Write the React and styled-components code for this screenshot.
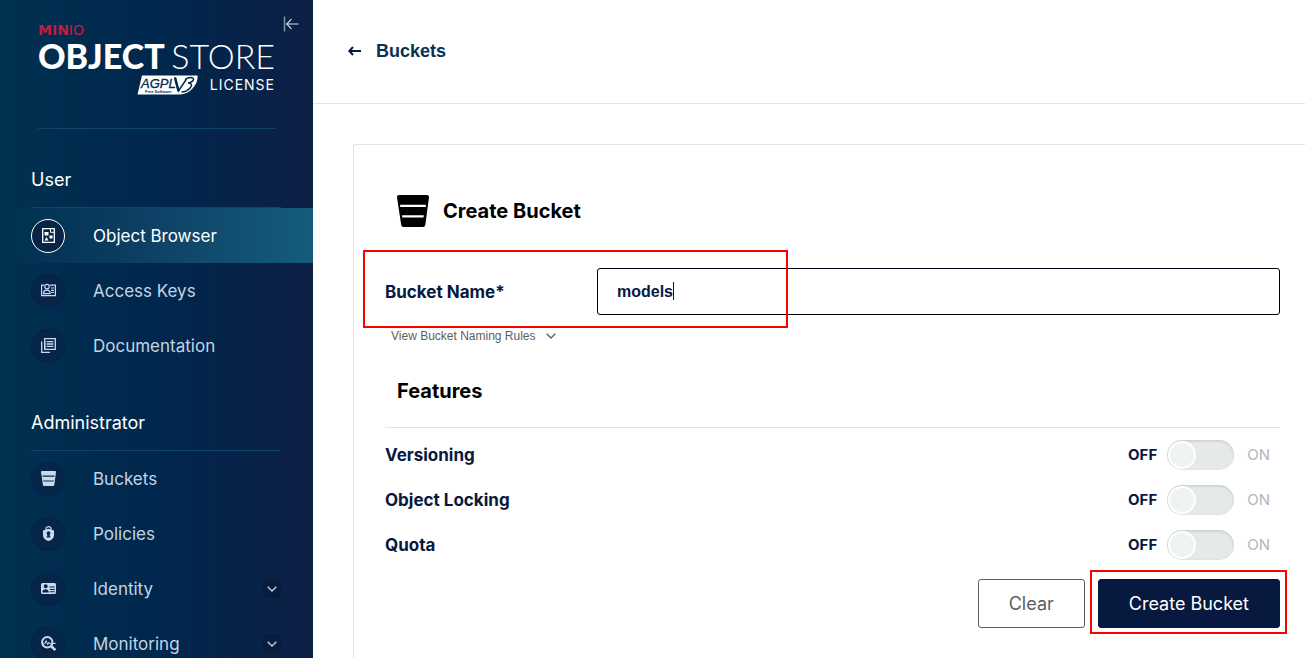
import React, { useState } from "react";
import styled, { createGlobalStyle, css } from "styled-components";

const GlobalStyle = createGlobalStyle`
  *, *::before, *::after { box-sizing: border-box; }
  body { margin: 0; background: #fff; font-family: Inter, "Liberation Sans", sans-serif; }
  button, input { font-family: inherit; }
`;

const Shell = styled.div`
  display: flex;
  height: 100vh;
  overflow: hidden;
`;

/* ---------- sidebar ---------- */

const Sidebar = styled.aside`
  flex: 0 0 313px;
  overflow: hidden;
  color: #fff;
  background: linear-gradient(90deg, #003150 0%, #00274d 50%, #0d1f45 100%);
`;

const Brand = styled.div`
  position: relative;
  margin: 0 38px;
  height: 129px;
  padding-top: 24px;
  border-bottom: 1px solid #0f446c;
`;

const CollapseButton = styled.button`
  position: absolute;
  top: 16px;
  right: -24px;
  padding: 0;
  border: 0;
  background: none;
  line-height: 0;
  cursor: pointer;
`;

const Company = styled.div`
  font: 700 14px/12px "DejaVu Sans", sans-serif;
  color: #c51b3f;
  span { font-weight: 400; }
`;

const Product = styled.div`
  display: flex;
  justify-content: space-between;
  margin-top: 2px;
  font: 900 34px/36px Lato, sans-serif;
  white-space: nowrap;
  span { font-weight: 300; }
`;

const License = styled.div`
  display: flex;
  justify-content: flex-end;
  align-items: center;
  gap: 12px;
  margin-top: 1px;
  font-size: 14px;
  line-height: 20px;
  span { letter-spacing: 1px; }
`;

const Section = styled.nav`
  & + & { margin-top: 22px; }
`;

const SectionTitle = styled.h2`
  margin: 0 32px 0 31px;
  height: ${(p) => (p.$first ? 79 : 56)}px;
  padding-bottom: 16px;
  display: flex;
  align-items: flex-end;
  border-bottom: 1px solid #0f446c;
  font-size: 18px;
  line-height: 22px;
  font-weight: 400;
`;

const NavLink = styled.a`
  display: flex;
  align-items: center;
  height: 55px;
  padding: 0 32px 0 31px;
  font-size: 17px;
  color: #c3d4e4;
  text-decoration: none;
  ${(p) => p.$active && css`
    color: #fff;
    background: linear-gradient(90deg, transparent 0%, #0e4266 50%, #155c7d 100%);
  `}
`;

const IconCircle = styled.span`
  display: grid;
  place-items: center;
  width: 34px;
  height: 34px;
  margin-right: 28px;
  border-radius: 50%;
  border: 1px solid ${(p) => (p.$active ? "#fff" : "#022248")};
  background: #072549;
  color: ${(p) => (p.$active ? "#fff" : "#c8dbee")};
`;

const Expander = styled.span`
  display: grid;
  place-items: center;
  width: 18px;
  height: 19px;
  margin-left: auto;
  border-radius: 2px;
  background: #081c3d;
`;

/* ---------- main ---------- */

const Main = styled.main`
  flex: 1;
  min-width: 0;
  display: flex;
  flex-direction: column;
`;

const TopBar = styled.header`
  display: flex;
  align-items: center;
  flex: 0 0 104px;
  padding: 0 35px 2px;
  border-bottom: 1px solid #e2e2e2;
`;

const BackLink = styled.a`
  display: flex;
  align-items: center;
  gap: 15px;
  font: 700 18px/20px "Liberation Sans", sans-serif;
  color: #073052;
  text-decoration: none;
`;

const Card = styled.form`
  flex: 1;
  margin: 40px 0 0 40px;
  padding: 48px 25px 0 31px;
  border: 1px solid #e2e2e2;
  border-width: 1px 0 0 1px;
  border-top-left-radius: 3px;
`;

const Title = styled.h1`
  display: flex;
  align-items: center;
  gap: 14px;
  height: 36px;
  margin: 0 0 39px;
  padding-left: 12px;
  font-size: 20px;
  font-weight: 700;
  color: #000;
`;

const NameRow = styled.div`
  position: relative;
  display: flex;
  align-items: center;
`;

const Label = styled.label`
  font-size: 17px;
  line-height: 22px;
  font-weight: 700;
  color: #07193e;
`;

const NameLabel = styled(Label)`
  flex: 0 0 212px;
`;

const InputWrap = styled.div`
  position: relative;
  flex: 1;
`;

const TextInput = styled.input`
  display: block;
  width: 100%;
  height: 47px;
  padding: 0 19px;
  border: 1px solid #000110;
  border-radius: 3px;
  outline: 0;
  background: #fff;
  font: 700 16px "Liberation Sans", sans-serif;
  color: #07193e;
`;

const Caret = styled.span`
  position: absolute;
  left: 76px;
  top: 14px;
  width: 1px;
  height: 18px;
  background: #07193e;
`;

const Highlight = styled.span`
  position: absolute;
  inset: ${(p) => p.$inset};
  border: 2px solid #f00;
  pointer-events: none;
  ${(p) => p.$width && css`width: ${p.$width}px;`}
`;

const RulesButton = styled.button`
  display: flex;
  align-items: center;
  gap: 10px;
  margin-top: 13px;
  padding: 0 6px;
  border: 0;
  background: none;
  font: 400 12px/16px "Liberation Sans", sans-serif;
  color: #5e5e5e;
`;

const SubTitle = styled.h2`
  margin: 34px 0 4px;
  padding: 0 12px 23px;
  border-bottom: 1px solid #e2e2e2;
  font-size: 20px;
  line-height: 26px;
  font-weight: 700;
  color: #000;
`;

const FeatureRow = styled.div`
  display: flex;
  align-items: center;
  justify-content: space-between;
  height: 45px;
`;

const SwitchGroup = styled.div`
  display: flex;
  align-items: center;
  padding-right: 10px;
`;

const SwitchText = styled.span`
  font-size: 15px;
  font-weight: ${(p) => (p.$on ? 700 : 400)};
  color: ${(p) => (p.$on ? "#07193e" : "#b3b6b9")};
`;

const Switch = styled.input`
  appearance: none;
  position: relative;
  width: 67px;
  height: 30px;
  margin: 0 13px 0 10px;
  border-radius: 15px;
  background: #e5e9ea;
  box-shadow: inset 0 1px 3px rgba(0, 0, 0, 0.15);
  cursor: pointer;
  &::before {
    content: "";
    position: absolute;
    top: 1px;
    left: ${(p) => (p.checked ? 38 : 1)}px;
    width: 28px;
    height: 28px;
    border: 2px solid #fff;
    border-radius: 50%;
    background: #f0f3f4;
  }
`;

const Actions = styled.div`
  display: flex;
  justify-content: flex-end;
  gap: 13px;
  margin-top: 12px;
`;

const Button = styled.button`
  position: relative;
  height: 49px;
  padding: 0 30px;
  border: 1px solid ${(p) => (p.$primary ? "#07193e" : "#5e5e5e")};
  border-radius: 3px;
  background: ${(p) => (p.$primary ? "#07193e" : "#fff")};
  color: ${(p) => (p.$primary ? "#fff" : "#5e5e5e")};
  font-size: 18px;
  cursor: pointer;
`;

/* ---------- icons ---------- */

const Icon = ({ size = 15, box = 15, children }) => (
  <svg width={size} height={size} viewBox={`0 0 ${box} ${box}`} fill="currentColor" aria-hidden="true">{children}</svg>
);

const ObjectBrowserIcon = () => (
  <Icon>
    <path d="M1.7.7h11.600v13.600H1.7z" fill="none" stroke="currentColor" strokeWidth="1.3" />
    <path d="M9.500 1v3.300h3.500" fill="none" stroke="currentColor" />
    <path d="M3.5 4h4v3.5h-4z M5.5 9l2 3.5h-4z" />
    <circle cx="10" cy="9" r="1.8" />
  </Icon>
);

const AccessKeysIcon = () => (
  <Icon>
    <g fill="none" stroke="currentColor" strokeWidth="1.2">
      <path d="M3 2.2H.6v10.500h13.8v-10.500H9" />
      <circle cx="6" cy="3.6" r="2.3" />
      <path d="M2.5 10.600c0-4.6 6.6-4.6 6.6 0z" />
      <path d="M10 5h3M10 7.3h3M10 9.5h3" />
    </g>
  </Icon>
);

const DocumentationIcon = () => (
  <Icon>
    <g fill="none" stroke="currentColor" strokeWidth="1.3">
      <path d="M3.7.7h10.6v10.6H3.7z" />
      <path d="M.7 3.5v10.8H9M3.7 11.3v-8" />
      <path d="M5.6 3.6h6.8M5.6 6h6.8M5.6 8.4h6.8" />
    </g>
  </Icon>
);

const BucketIcon = ({ size }) => (
  <Icon size={size} box={32}>
    <path
      fillRule="evenodd"
      d="M2 0h28q2.2 0 2 2.2L28.300 30q-.3 2-2.300 2H6.500q-2 0-2.300-2L0 2.200Q-.2 0 2 0zM3 9.800l.3 2.200h25.400l.3-2.200zM5 20.200l.3 2.200h21.200l.3-2.200z"
    />
  </Icon>
);

const PoliciesIcon = () => (
  <Icon>
    <path d="M5 4.500V2.600a2.500 2 0 0 1 5 0v1.900" fill="none" stroke="currentColor" strokeWidth="1.200" />
    <path
      fillRule="evenodd"
      d="M7.500 2.800 13 4.500v4.700c0 3-2.800 5-5.500 5.800C4.800 14.200 2 12.200 2 9.200V4.500zM7.500 5.200a2 2 0 0 0-1 3.700L5.400 11.500h4.200L8.500 8.900a2 2 0 0 0-1-3.700z"
    />
  </Icon>
);

const IdentityIcon = () => (
  <Icon>
    <path
      fillRule="evenodd"
      d="M1.500 2h12Q15 2 15 3.500v8Q15 13 13.500 13h-12Q0 13 0 11.500v-8Q0 2 1.500 2zM4.700 3.300a2 2 0 1 0 0 4 2 2 0 0 0 0-4zM1.300 11.500h6.500c0-4.200-6.500-4.200-6.500 0zM8.300 5.600v1h5.500v-1zM8.800 8v1h5V8zM8.800 10.300v1h5v-1z"
    />
  </Icon>
);

const MonitoringIcon = () => (
  <Icon>
    <g fill="none" stroke="currentColor">
      <circle cx="6.300" cy="6.300" r="5.200" strokeWidth="2" />
      <path d="M10 10l4.300 4" strokeWidth="2.600" />
      <path d="M2.500 7.200h1.700l1-2.600 1.500 4.200 1.200-2.600.7 1.200h6.200" strokeWidth="1" />
    </g>
  </Icon>
);

const Chevron = () => (
  <svg width="10" height="6" viewBox="0 0 10 6" fill="none" stroke="currentColor" strokeWidth="1.300" aria-hidden="true">
    <path d="M.7.7 5 5 9.300.7" />
  </svg>
);

const CollapseIcon = () => (
  <svg width="16" height="16" viewBox="0 0 16 16" fill="none" aria-hidden="true">
    <path d="M1.500.500v15" stroke="#7d93ab" strokeWidth="1.500" />
    <path d="M15.500 8H4M8.500 3.200 3.700 8l4.800 4.800" stroke="#d5dde6" strokeWidth="1.200" />
  </svg>
);

const BackIcon = () => (
  <svg width="13" height="10" viewBox="0 0 13 10" fill="none" stroke="#07193e" strokeWidth="2" aria-hidden="true">
    <path d="M13 5H1.500M5 1 1.300 5 5 9" />
  </svg>
);

/* AGPL v3 badge */
const AgplBadge = () => (
  <svg width="61" height="20" viewBox="0 0 61 20" role="img" aria-label="AGPL v3 Free Software">
    <path d="M5 .5h55.500c1 7-6 18.500-18 19H.5z" fill="#fff" />
    <path d="M38 2.500l3.500 13.500 8-12M48 4.500c4-3 9-2.500 8.500 0s-3 3-5.500 3.500c3.500 0 4.500 2 2.500 4.500s-5.500 4.500-9 4.500" fill="none" stroke="#02284e" strokeWidth="1.500" />
    <path d="M38 2.500l3.500 13.500" stroke="#02284e" strokeWidth="2.500" />
    <text x="4" y="13" fontFamily="Liberation Sans, sans-serif" fontStyle="italic" fontSize="13" fill="#02284e" stroke="#02284e" strokeWidth=".3">AGPL</text>
    <text x="8" y="18" fontFamily="Liberation Sans, sans-serif" fontWeight="700" fontSize="4" fill="#02284e">Free Software</text>
  </svg>
);

const userItems = [
  { label: "Object Browser", icon: ObjectBrowserIcon, active: true },
  { label: "Access Keys", icon: AccessKeysIcon },
  { label: "Documentation", icon: DocumentationIcon },
];

const adminItems = [
  { label: "Buckets", icon: BucketIcon },
  { label: "Policies", icon: PoliciesIcon },
  { label: "Identity", icon: IdentityIcon, expandable: true },
  { label: "Monitoring", icon: MonitoringIcon, expandable: true },
];

const NavSection = ({ title, items, first }) => (
  <Section aria-label={title}>
    <SectionTitle $first={first}>{title}</SectionTitle>
    {items.map(({ label, icon: ItemIcon, active, expandable }) => (
      <NavLink key={label} href="#" $active={active}>
        <IconCircle $active={active}><ItemIcon /></IconCircle>
        {label}
        {expandable && <Expander><Chevron /></Expander>}
      </NavLink>
    ))}
  </Section>
);

const Feature = ({ id, label }) => {
  const [on, setOn] = useState(false);
  return (
    <FeatureRow>
      <Label htmlFor={id}>{label}</Label>
      <SwitchGroup>
        <SwitchText $on={!on}>OFF</SwitchText>
        <Switch id={id} type="checkbox" role="switch" checked={on} onChange={(e) => setOn(e.target.checked)} />
        <SwitchText $on={on}>ON</SwitchText>
      </SwitchGroup>
    </FeatureRow>
  );
};

export default function App() {
  const [name, setName] = useState("models");
  return (
    <>
      <GlobalStyle />
      <Shell>
        <Sidebar>
          <Brand>
            <CollapseButton type="button" aria-label="Collapse menu"><CollapseIcon /></CollapseButton>
            <Company>MIN<span>IO</span></Company>
            <Product>OBJECT <span>STORE</span></Product>
            <License><AgplBadge /><span>LICENSE</span></License>
          </Brand>
          <NavSection title="User" items={userItems} first />
          <NavSection title="Administrator" items={adminItems} />
        </Sidebar>
        <Main>
          <TopBar>
            <BackLink href="#"><BackIcon />Buckets</BackLink>
          </TopBar>
          <Card onSubmit={(e) => e.preventDefault()}>
            <Title><BucketIcon size={32} />Create Bucket</Title>
            <NameRow>
              <NameLabel htmlFor="bucket-name">Bucket Name*</NameLabel>
              <InputWrap>
                <TextInput id="bucket-name" value={name} onChange={(e) => setName(e.target.value)} />
                {name === "models" && <Caret />}
              </InputWrap>
              <Highlight $inset="-18px auto -13px -22px" $width={425} />
            </NameRow>
            <RulesButton type="button">View Bucket Naming Rules <Chevron /></RulesButton>
            <SubTitle>Features</SubTitle>
            <Feature id="versioning" label="Versioning" />
            <Feature id="locking" label="Object Locking" />
            <Feature id="quota" label="Quota" />
            <Actions>
              <Button type="button" onClick={() => setName("")}>Clear</Button>
              <Button type="submit" $primary>
                Create Bucket
                <Highlight $inset="-10px -8px -7px -9px" />
              </Button>
            </Actions>
          </Card>
        </Main>
      </Shell>
    </>
  );
}
